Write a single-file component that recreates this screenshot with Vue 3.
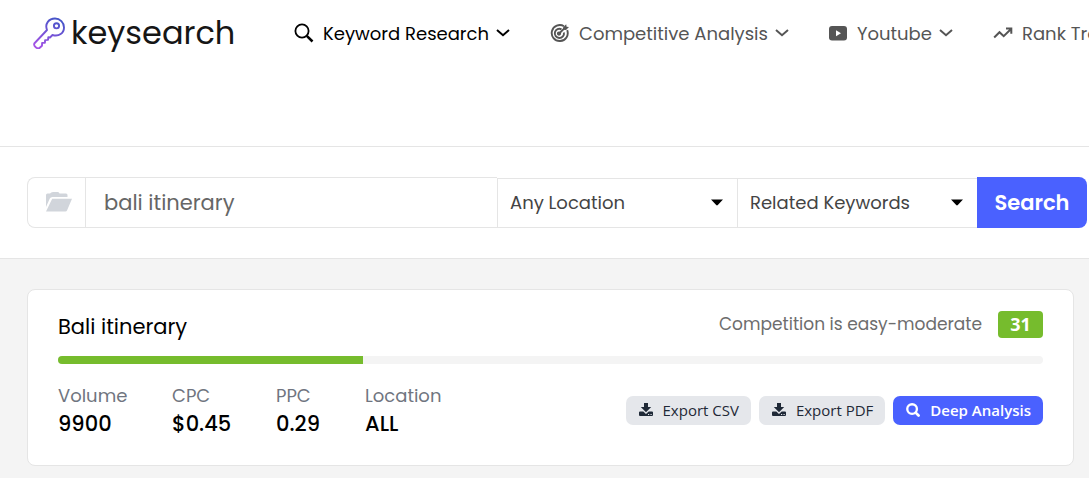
<script setup>
import { ref } from 'vue'

const keyword = ref('bali itinerary')
const location = ref('Any Location')
const mode = ref('Related Keywords')
const score = 31
const stats = [
  { label: 'Volume', value: '9900' },
  { label: 'CPC', value: '$0.45' },
  { label: 'PPC', value: '0.29' },
  { label: 'Location', value: 'ALL' },
]
const nav = [
  { id: 'search', label: 'Keyword Research', active: true },
  { id: 'target', label: 'Competitive Analysis' },
  { id: 'video', label: 'Youtube' },
  { id: 'trend', label: 'Rank Tracking' },
]
</script>

<template>
  <div class="page">
    <header class="header">
      <a class="logo" href="#" aria-label="keysearch">
        <svg class="key" viewBox="0 0 32 32" fill="none" stroke="url(#keyGradient)" stroke-width="1.900" stroke-linejoin="round" stroke-linecap="round">
          <defs>
            <linearGradient id="keyGradient" gradientUnits="userSpaceOnUse" x1="22" y1="1" x2="8" y2="32">
              <stop offset="0" stop-color="#4655c8" />
              <stop offset="1" stop-color="#a653e6" />
            </linearGradient>
          </defs>
          <path d="M14 13C11.500 6.500 16 1.500 22 1.500a9 9 0 0 1 9 9c0 5.500-5 9.500-11.500 7.500l-2.500 2.500-1.700-.2-.3 2.600-2.900.2-.2 2.700-2.800.1-.1 2.800-2.800 2.500C4.500 32 .2 29.500 1.300 26.500z" />
          <circle cx="23.500" cy="8.800" r="2.600" />
        </svg>
        <span>keysearch</span>
      </a>
      <nav class="nav">
        <a v-for="item in nav" :key="item.id" class="nav-item" :class="{ active: item.active }" href="#">
          <svg v-if="item.id === 'search'" class="nav-icon" viewBox="0 0 20 20" fill="none" stroke="currentColor">
            <circle cx="8" cy="8" r="6.600" stroke-width="1.800" />
            <path d="M12.800 12.800l5.700 5.700" stroke-width="2.500" />
          </svg>
          <svg v-else-if="item.id === 'target'" class="nav-icon" viewBox="0 0 20 20" fill="none" stroke="currentColor" stroke-width="1.900">
            <path d="M14 3.300A8 8 0 1 0 17.200 7.200" />
            <path d="M11.500 6.300A4.600 4.600 0 1 0 13.900 9.500" />
            <path d="M8.800 10.800l6-6" />
            <circle cx="9" cy="10.600" r="1.200" />
            <path d="M13.200 6.800V4.300L16.200 1.300l.4 2.400 2.400.4-3 2.900z" fill="currentColor" stroke="none" />
          </svg>
          <svg v-else-if="item.id === 'video'" class="nav-icon" viewBox="0 0 20 20">
            <rect x="1" y="3" width="18" height="14.500" rx="3" fill="currentColor" />
            <path d="M8 7.200v6l5-3z" fill="#fff" />
          </svg>
          <svg v-else class="nav-icon" viewBox="0 0 20 20" fill="none" stroke="currentColor" stroke-width="2">
            <path d="M1.200 14.500l5.300-5.300 4.200 4L18 6M13 5.500h5.300v5.300" />
          </svg>
          <span>{{ item.label }}</span>
          <svg class="chevron" viewBox="0 0 14 10" fill="none" stroke="currentColor" stroke-width="2"><path d="M1 2l6 5.200L13 2" /></svg>
        </a>
      </nav>
    </header>

    <form class="search" @submit.prevent>
      <button class="folder" type="button" aria-label="Saved lists">
        <svg viewBox="0 0 28 22" fill="currentColor">
          <path d="M1 15V3q0-1.500 1.500-1.500H5Q6 0 8 0h5q1 0 1.500 1.500h6.500q1.500 0 1.500 1.500v2H7.500Q5.500 5 4.800 6.500z" />
          <path d="M7.200 6.700H27L22 18.400Q21.600 19.500 20.400 19.500H1z" />
        </svg>
      </button>
      <input v-model="keyword" class="keyword" type="text" aria-label="Keyword">
      <div class="select">
        <select v-model="location" aria-label="Location"><option>Any Location</option></select>
        <svg class="caret" viewBox="0 0 12 7"><path d="M0 .5h12L6.800 6q-.8.800-1.600 0z" /></svg>
      </div>
      <div class="select">
        <select v-model="mode" aria-label="Result type"><option>Related Keywords</option></select>
        <svg class="caret" viewBox="0 0 12 7"><path d="M0 .5h12L6.800 6q-.8.800-1.600 0z" /></svg>
      </div>
      <button class="submit" type="submit">Search</button>
    </form>

    <main class="content">
      <section class="card">
        <div class="card-head">
          <h1>Bali itinerary</h1>
          <div class="competition">
            <span>Competition is easy-moderate</span>
            <strong class="score">{{ score }}</strong>
          </div>
        </div>
        <div class="track"><div class="fill" :style="{ width: score + '%' }"></div></div>
        <div class="card-foot">
          <dl class="stats">
            <div v-for="s in stats" :key="s.label">
              <dt>{{ s.label }}</dt>
              <dd>{{ s.value }}</dd>
            </div>
          </dl>
          <div class="actions">
            <button v-for="type in ['CSV', 'PDF']" :key="type" class="action" type="button">
              <svg viewBox="1 1 14 14" fill="currentColor">
                <path d="M6 1h4v4h3.200L8 10.200 2.800 5H6z" />
                <path fill-rule="evenodd" d="M2 9.500h3.300L8 12l2.700-2.500H14q1 0 1 1v2.500q0 1-1 1H2q-1 0-1-1v-2.500q0-1 1-1zM10 12v1h1.200v-1zM12.500 12v1h1.200v-1z" />
              </svg>
              Export {{ type }}
            </button>
            <button class="action primary" type="button">
              <svg viewBox="1 1 14.500 14.500" fill="none" stroke="currentColor" stroke-width="2.400">
                <circle cx="7.300" cy="7.300" r="5" /><path d="M11 11l3 3" stroke-linecap="round" stroke-width="2.800" />
              </svg>
              Deep Analysis
            </button>
          </div>
        </div>
      </section>
    </main>
  </div>
</template>

<style>
body {
  background: #f4f4f4;
}
</style>

<style scoped>
* {
  box-sizing: border-box;
}
.page {
  font-family: Poppins, Inter, sans-serif;
  overflow: hidden;
  color: #000;
}
button, input, select {
  font-family: inherit;
  margin: 0;
}
.header {
  display: flex;
  align-items: flex-start;
  height: 147px;
  padding-left: 33px;
  background: #fff;
  border-bottom: 1px solid #e5e5e5;
}
.logo {
  display: flex;
  flex: 0 0 261px;
  align-items: center;
  gap: 6px;
  height: 66px;
  color: #161616;
  font-size: 32px;
  line-height: 48px;
  text-decoration: none;
}
.key {
  width: 32px;
  height: 32px;
}
.nav {
  display: grid;
  grid-template-columns: 256px 278px 165px 200px;
  height: 66px;
}
.nav-item {
  display: flex;
  align-items: center;
  color: #555;
  font-size: 18px;
  white-space: nowrap;
  text-decoration: none;
}
.nav-item.active {
  color: #000;
}
.nav-icon {
  flex: none;
  width: 20px;
  height: 20px;
  margin-right: 9px;
}
.chevron {
  flex: none;
  width: 14px;
  height: 10px;
  margin-left: 7px;
}
.search {
  display: flex;
  align-items: flex-end;
  padding: 30px 2px 30px 27px;
  background: #fff;
  border-bottom: 1px solid #e5e5e5;
}
.folder {
  display: grid;
  place-items: center;
  width: 58px;
  height: 51px;
  padding: 0 0 0 4px;
  background: #fff;
  border: 1px solid #e5e5e5;
  border-right: 0;
  border-radius: 8px 0 0 8px;
  color: #d1d5db;
}
.folder svg {
  width: 28px;
  height: 22px;
}
.keyword {
  flex: 1;
  min-width: 0;
  height: 51px;
  padding: 0 18px;
  border: 1px solid #e5e5e5;
  border-right: 0;
  color: #666;
  font-size: 21px;
}
.select {
  position: relative;
  width: 240px;
}
.select select {
  display: block;
  width: 100%;
  height: 50px;
  padding: 0 32px 2px 12px;
  appearance: none;
  background: #fff;
  border: 1px solid #e5e5e5;
  border-right: 0;
  border-radius: 0;
  color: #444;
  font-size: 18px;
}
.caret {
  position: absolute;
  top: 21px;
  right: 14px;
  width: 12px;
  height: 7px;
  pointer-events: none;
}
.submit {
  width: 110px;
  height: 51px;
  padding: 0;
  background: #4a61ff;
  border: 0;
  border-radius: 0 8px 8px 0;
  color: #fff;
  font-size: 21px;
  font-weight: 600;
}
.content {
  padding: 30px 15px 12px 27px;
}
.card {
  padding: 21px 30px 27px;
  background: #fff;
  border: 1px solid #e5e5e5;
  border-radius: 8px;
}
.card-head {
  display: flex;
  justify-content: space-between;
}
h1 {
  margin: 0;
  font-size: 21px;
  font-weight: 400;
  line-height: 32px;
}
.competition {
  display: flex;
  align-items: flex-start;
  gap: 16px;
  color: #6d6d6d;
  font-size: 17px;
  line-height: 27px;
}
.score {
  width: 45px;
  background: #76bc2d;
  border-radius: 4px;
  color: #fff;
  font-family: "Open Sans", sans-serif;
  font-size: 18px;
  font-weight: 700;
  text-align: center;
}
.track {
  height: 8px;
  margin-top: 13px;
  overflow: hidden;
  background: #f4f4f4;
  border-radius: 4px;
}
.fill {
  height: 100%;
  background: #76bc2d;
}
.card-foot {
  display: flex;
  align-items: center;
  justify-content: space-between;
  margin-top: 18px;
}
.stats {
  display: grid;
  grid-template-columns: 114px 104px 89px auto;
  margin: 0;
}
dt {
  margin-bottom: 1px;
  color: #707580;
  font-size: 18px;
  line-height: 27px;
}
dd {
  margin: 0;
  font-size: 21px;
  font-weight: 500;
  line-height: 28px;
}
.actions {
  display: flex;
  gap: 8px;
}
.action {
  display: flex;
  align-items: center;
  gap: 10px;
  height: 29px;
  padding: 0 12px 0 13px;
  background: #e5e7eb;
  border: 0;
  border-radius: 7px;
  color: #1f2937;
  font-family: "Open Sans", sans-serif;
  font-size: 15px;
  white-space: nowrap;
}
.action svg {
  width: 14px;
  height: 14px;
}
.primary {
  background: #4a61ff;
  color: #fff;
  font-weight: 600;
}
</style>
